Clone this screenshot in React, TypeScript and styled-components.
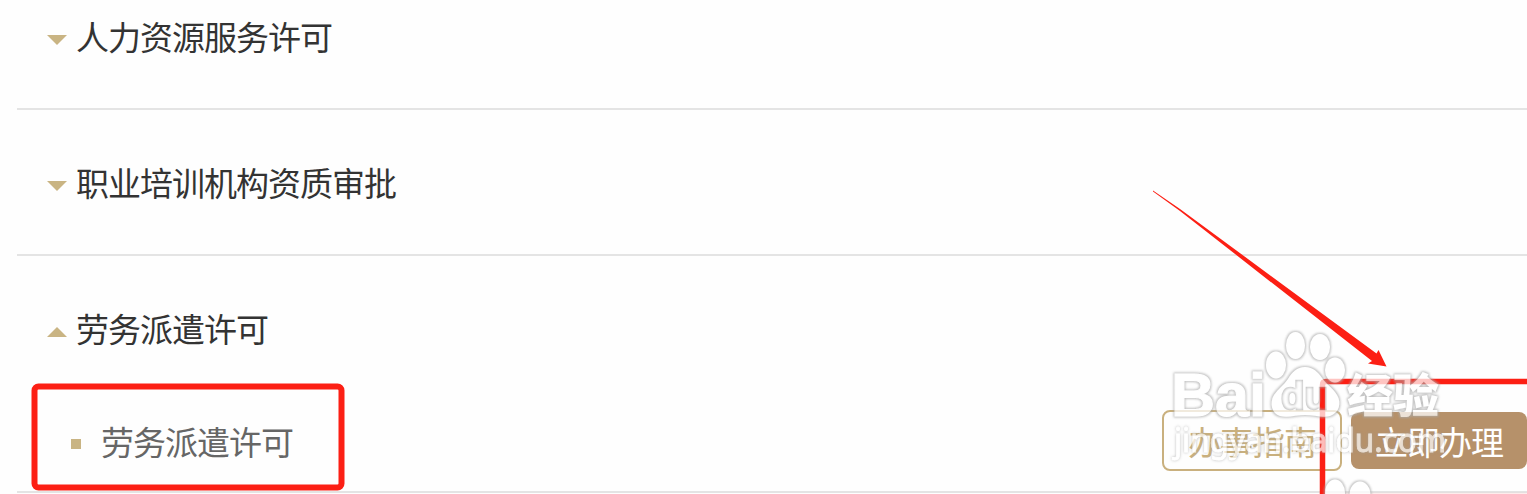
import React from 'react';
import styled, { createGlobalStyle } from 'styled-components';

const GlobalStyle = createGlobalStyle`
  * { box-sizing: border-box; }
  body { margin: 0; background: #fefefe; overflow: hidden; font-family: "Noto Sans CJK SC", sans-serif; }
`;

const Page = styled.div`
  position: relative;
  height: 494px;
  padding-left: 17px;
  overflow: hidden;
`;

const Item = styled.section<{ $first?: boolean }>`
  border-bottom: 2px solid #e4e4e4;
  padding-top: ${p => (p.$first ? 0 : 36)}px;
`;

const Heading = styled.div`
  display: flex;
  align-items: center;
  height: 78px;
  padding-left: 30px;
  gap: 9px;
`;

const Arrow = styled.i<{ $open?: boolean }>`
  width: 20px;
  height: 10px;
  margin-top: 2px;
  background: #c9b483;
  clip-path: ${p => (p.$open ? 'polygon(50% 0, 100% 100%, 0 100%)' : 'polygon(0 0, 100% 0, 50% 100%)')};
`;

const Title = styled.h2`
  margin: 0;
  padding-bottom: 6px;
  font-size: 33px;
  letter-spacing: -1px;
  line-height: 48px;
  font-weight: 400;
  color: #333;
`;

const Spacer = styled.div`
  height: 30px;
`;

const SubItem = styled.div`
  display: flex;
  align-items: center;
  height: 121px;
  padding: 20px 0 0 54px;
`;

const Bullet = styled.i`
  width: 10px;
  height: 10px;
  margin: 7px 20px 0 0;
  background: #c9b483;
`;

const SubTitle = styled.span`
  flex: 1;
  font-size: 33px;
  letter-spacing: -1px;
  line-height: 48px;
  font-weight: 400;
  color: #666;
`;

const Button = styled.button<{ $solid?: boolean }>`
  width: ${p => (p.$solid ? 176 : 180)}px;
  height: ${p => (p.$solid ? 57 : 61)}px;
  padding: 0;
  border: ${p => (p.$solid ? '0' : '2px solid #c9b07e')};
  border-radius: 8px;
  background: ${p => (p.$solid ? '#b6916a' : 'transparent')};
  color: ${p => (p.$solid ? '#fff' : '#c9b07e')};
  font: 400 33px/48px "Noto Sans CJK SC", sans-serif;
  letter-spacing: -1px;
  margin-left: ${p => (p.$solid ? 9 : 0)}px;
`;

const Overlay = styled.svg`
  position: absolute;
  inset: 0;
  pointer-events: none;
`;

const Watermark = () => (
  <g>
    <g fill="#fff" opacity=".74" filter="url(#edge)">
      <text x="1171" y="416" fontSize="62" fontFamily="Liberation Sans" fontWeight="700" stroke="#fff" strokeWidth="1" textLength="95" lengthAdjust="spacingAndGlyphs">Bai</text>
      <ellipse cx="1276" cy="365" rx="10" ry="13.5" />
      <ellipse cx="1295.5" cy="345.5" rx="9.5" ry="13.5" />
      <ellipse cx="1320" cy="347" rx="10" ry="13" />
      <ellipse cx="1335" cy="370" rx="10" ry="12.5" />
      <path mask="url(#du)" d="M1305 367c-8 0-13 5-17 12-4 6-10 10-14 16-5 8-2 19 6 21 8 2 16-1 25-1s18 3 25 1c9-3 12-13 7-21-4-7-11-11-15-17-4-6-9-11-17-11Z" />
      <text x="1347" y="412" fontSize="46" fontWeight="900" fontFamily="Noto Sans CJK SC">经验</text>
      <ellipse cx="1335" cy="493" rx="10" ry="13.5" />
      <ellipse cx="1360" cy="495" rx="10.5" ry="13.5" />
    </g>
    <g fill="#fff" opacity=".7" filter="url(#soft)">
      <text x="1174" y="452" fontSize="32" fontFamily="Noto Sans" stroke="#fff" strokeWidth=".8" textLength="272" lengthAdjust="spacingAndGlyphs">jingyan.baidu.com</text>
    </g>
  </g>
);

export default function App() {
  return (
    <Page>
      <GlobalStyle />
      <Item $first>
        <Heading><Arrow /><Title>人力资源服务许可</Title></Heading>
        <Spacer />
      </Item>
      <Item>
        <Heading><Arrow /><Title>职业培训机构资质审批</Title></Heading>
        <Spacer />
      </Item>
      <Item>
        <Heading><Arrow $open /><Title>劳务派遣许可</Title></Heading>
        <SubItem>
          <Bullet />
          <SubTitle>劳务派遣许可</SubTitle>
          <Button>办事指南</Button>
          <Button $solid>立即办理</Button>
        </SubItem>
      </Item>
      <Overlay width="1527" height="494" viewBox="0 0 1527 494" aria-hidden="true">
        <defs>
          <mask id="du" maskUnits="userSpaceOnUse" x="1260" y="355" width="90" height="70">
            <rect x="1260" y="355" width="90" height="70" fill="#fff" />
            <text x="1281" y="409" fontFamily="Liberation Sans" fontSize="38" fontWeight="700" fill="#000" stroke="#000" strokeWidth="2.5" textLength="47" lengthAdjust="spacingAndGlyphs">du</text>
          </mask>
          <filter id="edge" x="-5%" y="-10%" width="110%" height="120%">
            <feMorphology in="SourceAlpha" operator="dilate" radius="1" result="d" />
            <feGaussianBlur in="d" stdDeviation="0.9" result="b" />
            <feFlood floodColor="#acacac" />
            <feComposite in2="b" operator="in" result="s" />
            <feMerge><feMergeNode in="s" /><feMergeNode in="SourceGraphic" /></feMerge>
          </filter>
          <filter id="soft" x="-5%" y="-20%" width="110%" height="140%">
            <feGaussianBlur in="SourceAlpha" stdDeviation="1.4" result="b" />
            <feFlood floodColor="#a0a0a0" />
            <feComposite in2="b" operator="in" result="s" />
            <feMerge><feMergeNode in="s" /><feMergeNode in="SourceGraphic" /></feMerge>
          </filter>
        </defs>
        <g fill="none" stroke="#fc1f14">
          <rect x="34.5" y="386.5" width="307" height="101" rx="4" strokeWidth="6" />
          <path d="M1322.5 494V385q0-3.5 3.5-3.5H1527" strokeWidth="5.5" />
          <path d="M1325 493.5H1527" strokeWidth="1.5" opacity=".08" />
        </g>
        <path fill="#fc1f14" d="M1153 190.5 L1180 209 L1376.5 353.5 L1378.5 350 L1386.5 366.5 L1368 363.5 L1372 361 L1180 211 L1153 191.5Z" />
        <Watermark />
      </Overlay>
    </Page>
  );
}
